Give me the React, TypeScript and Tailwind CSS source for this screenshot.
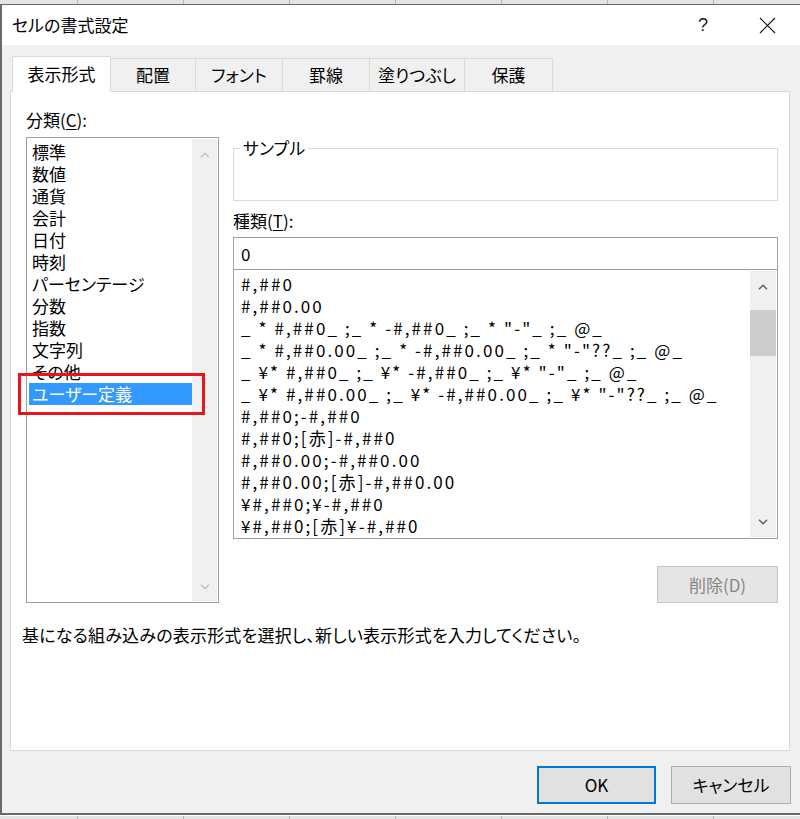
import React from "react";

const FONT = "font-['Noto_Sans_CJK_JP',sans-serif] [font-feature-settings:'palt']";

function GridStrip() {
  return (
    <div className="flex h-[4px] shrink-0 bg-[#e4e4e4]">
      <div className="w-[78px] shrink-0 border-r border-[#b5b5b5]" />
      {Array.from({ length: 7 }).map((_, i) => (
        <div key={i} className="w-[106px] shrink-0 border-r border-[#b5b5b5]" />
      ))}
    </div>
  );
}

function Chevron({ up, color }: { up?: boolean; color: string }) {
  return (
    <svg width="10" height="6" viewBox="0 0 10 6">
      <path
        d={up ? "M1 5.2 L5 1.2 L9 5.2" : "M1 0.8 L5 4.8 L9 0.8"}
        stroke={color}
        strokeWidth="1.5"
        fill="none"
      />
    </svg>
  );
}

const categories = [
  "標準",
  "数値",
  "通貨",
  "会計",
  "日付",
  "時刻",
  "パーセンテージ",
  "分数",
  "指数",
  "文字列",
  "その他",
  "ユーザー定義",
];

const formats = [
  "#,##0",
  "#,##0.00",
  '_ * #,##0_ ;_ * -#,##0_ ;_ * "-"_ ;_ @_',
  '_ * #,##0.00_ ;_ * -#,##0.00_ ;_ * "-"??_ ;_ @_',
  '_ ¥* #,##0_ ;_ ¥* -#,##0_ ;_ ¥* "-"_ ;_ @_',
  '_ ¥* #,##0.00_ ;_ ¥* -#,##0.00_ ;_ ¥* "-"??_ ;_ @_',
  "#,##0;-#,##0",
  "#,##0;[赤]-#,##0",
  "#,##0.00;-#,##0.00",
  "#,##0.00;[赤]-#,##0.00",
  "¥#,##0;¥-#,##0",
  "¥#,##0;[赤]¥-#,##0",
];

const tabs = [
  { label: "配置", w: "w-[85px]" },
  { label: "フォント", w: "w-[87px]" },
  { label: "罫線", w: "w-[87px]" },
  { label: "塗りつぶし", w: "w-[95px]" },
  { label: "保護", w: "w-[88px]" },
];

export default function App() {
  return (
    <div className={`w-[800px] h-[819px] bg-[#e4e4e4] overflow-hidden flex flex-col text-[#000] ${FONT}`}>
      <GridStrip />
      {/* window */}
      <div className="h-[811px] shrink-0 border-l-2 border-t border-b-2 border-[#6a6a6a] flex flex-col bg-[#f0f0f0]">
        {/* title bar */}
        <div className="h-[40px] shrink-0 bg-white flex items-center pl-[10px] pr-[10px]">
          <span className="text-[17px] leading-[22px]">セルの書式設定</span>
          <div className="ml-auto flex items-center">
            <div className="w-[46px] h-[40px] flex items-center justify-center text-[18px] leading-none font-['Liberation_Sans',sans-serif] text-[#1a1a1a]">
              ?
            </div>
            <div className="w-[46px] h-[40px] flex items-center justify-center ml-[18px]">
              <svg width="17" height="17" viewBox="0 0 17 17">
                <path d="M1 1 L16 16 M16 1 L1 16" stroke="#111" strokeWidth="1.1" fill="none" />
              </svg>
            </div>
          </div>
        </div>

        {/* body */}
        <div className="flex-1 flex flex-col pl-[8px] pt-[11px]">
          {/* tabs */}
          <div className="h-[35px] flex items-end ml-[2px]">
            <div className="relative z-10 w-[99px] h-[36px] -mb-px bg-white border-t border-l border-r border-[#d9d9d9] flex items-center justify-center text-[17px] leading-[22px] pb-[2px]">
              表示形式
            </div>
            {tabs.map((t) => (
              <div
                key={t.label}
                className={`${t.w} h-[33px] border-t border-r border-[#d9d9d9] flex items-center justify-center text-[17px] leading-[22px]`}
              >
                {t.label}
              </div>
            ))}
          </div>

          {/* panel */}
          <div className="w-[780px] h-[660px] bg-white border border-[#d9d9d9] pt-[17px] pl-[11px] flex flex-col">
            <div className="flex pl-[4px] gap-[14px]">
              {/* left column */}
              <div className="relative w-[193px] flex flex-col">
                <div className="h-[28px] text-[17px] leading-[22px]">
                  分類(<span className="underline underline-offset-2">C</span>):
                </div>
                <div className="h-[466px] border border-[#a0a0a0] p-[1px] flex">
                  <div className="flex-1 pt-[2px] pl-[1px]">
                    {categories.map((c, i) => (
                      <div
                        key={c}
                        className={`h-[22px] pl-[3px] text-[17px] leading-[22px] ${
                          i === categories.length - 1 ? "bg-[#3399ff] text-white" : ""
                        }`}
                      >
                        {c}
                      </div>
                    ))}
                  </div>
                  <div className="w-[25px] bg-[#f0f0f0] flex flex-col">
                    <div className="h-[32px] flex items-center justify-center">
                      <Chevron up color="#c2c2c2" />
                    </div>
                    <div className="flex-1" />
                    <div className="h-[28px] flex items-center justify-center">
                      <Chevron color="#c2c2c2" />
                    </div>
                  </div>
                </div>
                {/* annotation */}
                <div className="absolute left-[-8px] top-[264px] w-[187px] h-[42px] border-[3px] border-[#e8141c]" />
              </div>

              {/* right column */}
              <div className="w-[545px] pt-[28px] flex flex-col">
                <fieldset className="h-[64px] border border-[#dcdcdc] m-0 p-0">
                  <legend className="ml-[6px] px-[3px] text-[17px] leading-[22px]">サンプル</legend>
                </fieldset>
                <div className="mt-[9px] h-[22px] text-[17px] leading-[22px]">
                  種類(<span className="underline underline-offset-2">T</span>):
                </div>
                <div className="mt-[5px] h-[33px] border border-[#a0a0a0] flex items-center pl-[7px] text-[17px] leading-[22px]">
                  0
                </div>
                <div className="h-[269px] border-l border-r border-b border-[#a0a0a0] p-[1px] flex">
                  <div className="flex-1 pt-[2px] pl-[6px] overflow-hidden">
                    {formats.map((f) => (
                      <div
                        key={f}
                        className="h-[22px] whitespace-pre text-[17px] leading-[22px] tracking-[2.1px]"
                      >
                        {f}
                      </div>
                    ))}
                  </div>
                  <div className="w-[26px] bg-[#f0f0f0] flex flex-col">
                    <div className="h-[32px] flex items-center justify-center">
                      <Chevron up color="#606060" />
                    </div>
                    <div className="h-[7px]" />
                    <div className="h-[46px] bg-[#cdcdcd]" />
                    <div className="flex-1" />
                    <div className="h-[30px] flex items-center justify-center">
                      <Chevron color="#606060" />
                    </div>
                  </div>
                </div>
                <div className="mt-[27px] self-end w-[121px] h-[37px] bg-[#e5e5e5] border border-[#c4c4c4] flex items-center justify-center text-[17px] leading-[22px] text-[#858585]">
                  削除(D)
                </div>
              </div>
            </div>

            <div className="mt-[21px] h-[22px] text-[17px] leading-[22px] tracking-[0.2px]">
              基になる組み込みの表示形式を選択し、新しい表示形式を入力してください。
            </div>
          </div>

          {/* buttons */}
          <div className="mt-[15px] flex justify-end gap-[15px] pr-[9px]">
            <div className="w-[119px] h-[38px] bg-[#e1e1e1] border-2 border-[#0078d7] flex items-center justify-center text-[17px] leading-[22px]">
              OK
            </div>
            <div className="w-[120px] h-[38px] bg-[#e1e1e1] border border-[#adadad] flex items-center justify-center text-[17px] leading-[22px]">
              キャンセル
            </div>
          </div>
        </div>
      </div>
      <div className="h-px shrink-0 bg-white" />
      <GridStrip />
    </div>
  );
}
